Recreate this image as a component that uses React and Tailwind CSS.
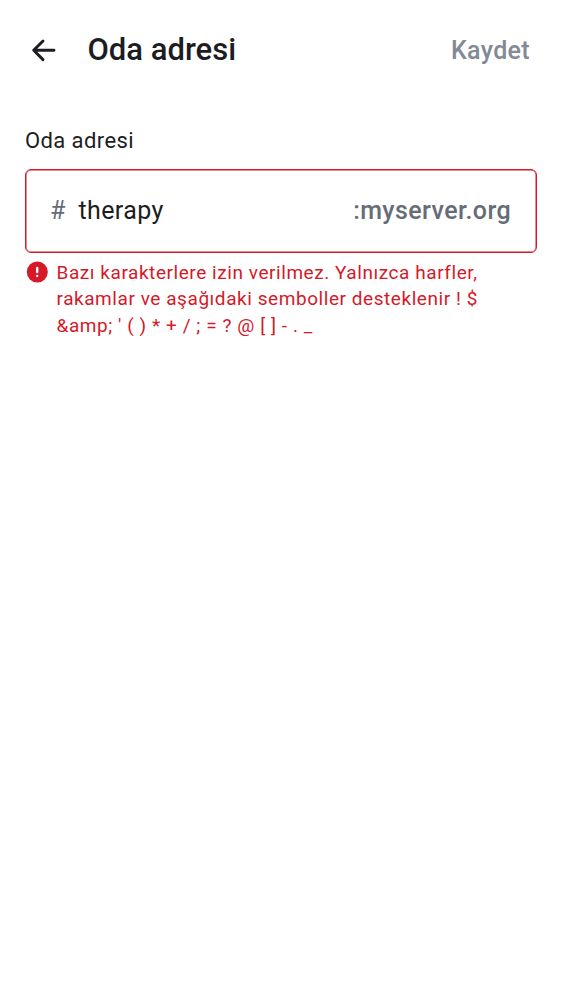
export default function App() {
  return (
    <main className="h-[1000px] w-[562px] bg-white font-['Roboto',sans-serif] text-[#1b1d22]">
      <header className="flex h-[100px] items-center pl-[31px] pr-8">
        <svg className="h-[25px] w-[25px]" viewBox="0 0 25 25" fill="none" stroke="currentColor" strokeWidth="2.9" strokeLinecap="round" strokeLinejoin="round">
          <path d="M23 12.3H2.7M12 3L2.7 12.3L12 21.6" />
        </svg>
        <h1 className="ml-[31.5px] text-[31px] font-medium leading-10 whitespace-nowrap">Oda adresi</h1>
        <button className="ml-auto pt-px text-[25px] font-medium tracking-[0.35px] text-[#818a95]">Kaydet</button>
      </header>
      <section className="px-[25px] pt-[25px]">
        <label className="block h-[44px] text-[22px] leading-8 tracking-[0.4px]">Oda adresi</label>
        <div className="flex h-[84px] items-center rounded-md border border-[#d51928] pr-[25px] pl-6 text-[25px] leading-8 ring-[0.5px] ring-inset ring-[#d51928]">
          <span className="text-[#656d77]">#</span>
          <span className="ml-[13px] tracking-[0.4px]">therapy</span>
          <span className="ml-auto font-medium tracking-[0.4px] text-[#656d77]">:myserver.org</span>
        </div>
        <div className="mt-[6px] flex text-[#d51928]">
          <svg className="mt-[1.5px] ml-px h-[22px] w-[22px] shrink-0" viewBox="0 0 22 22">
            <circle cx="11.3" cy="11" r="10.5" fill="currentColor" />
            <path d="M11.2 6.9v4.3M11.2 15v.1" stroke="white" strokeWidth="2.3" strokeLinecap="round" />
          </svg>
          <p className="mt-[0.7px] ml-[8.5px] text-[19px] leading-[26.6px] tracking-[0.56px] whitespace-nowrap">
            Bazı karakterlere izin verilmez. Yalnızca harfler,<br />
            rakamlar ve aşağıdaki semboller desteklenir ! $<br />
            &amp;amp; ' ( ) * + / ; = ? @ [ ] - . _
          </p>
        </div>
      </section>
    </main>
  );
}
